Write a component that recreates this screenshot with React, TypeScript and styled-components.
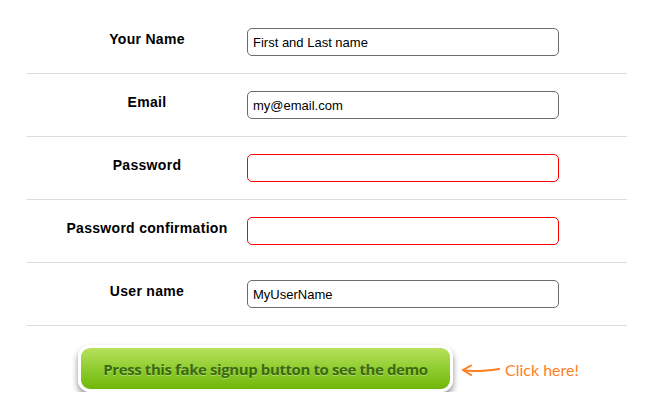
import React from "react";
import styled, { createGlobalStyle } from "styled-components";

const Global = createGlobalStyle`
  html, body { margin: 0; padding: 0; background: #fff; }
  body { font-family: "Liberation Sans", Arial, sans-serif; }
`;

const Form = styled.form`
  width: 600px;
  margin: 11px 0 0 27px;
`;

const Row = styled.div`
  display: grid;
  grid-template-columns: 200px 312px;
  align-items: start;
  padding: 17px 0 17px 20px;
  border-bottom: 1px solid #dddddd;
`;

const Label = styled.label`
  padding-top: 3px;
  text-align: center;
  font: bold 14px/16px "Liberation Sans", Arial, sans-serif;
  letter-spacing: 0.3px;
  color: #000;
`;

const Input = styled.input<{ $invalid?: boolean }>`
  box-sizing: border-box;
  width: 312px;
  height: 28px;
  margin: 0;
  padding: 0 5px;
  border: 1px solid ${(p) => (p.$invalid ? "#ff0000" : "#6b6b6b")};
  border-radius: 5px;
  background: #fff;
  font: 13px "Liberation Sans", Arial, sans-serif;
  color: #000;
  outline: none;
`;

const Footer = styled.div`
  display: flex;
  align-items: center;
  padding: 19px 0 0 51px;
`;

const Button = styled.button`
  box-sizing: border-box;
  width: 375px;
  height: 47px;
  border: 3px solid #fff;
  border-radius: 12px;
  background: linear-gradient(#b6e15c, #8ccb2c 55%, #6fb60a);
  box-shadow: 0 4px 6px rgba(0, 0, 0, 0.45);
  color: #3b6a0e;
  font: bold 15px "Open Sans", "DejaVu Sans", sans-serif;
  letter-spacing: -0.4px;
  text-shadow: 0 1px 0 rgba(255, 255, 255, 0.35);
  cursor: pointer;
  padding: 1px 0 0;
`;

const Hint = styled.span`
  display: flex;
  align-items: center;
  gap: 5px;
  margin: 2px 0 0 9px;
  color: #ff7d1e;
  font: 16px "Lato", sans-serif;
`;

const fields = [
  { label: "Your Name", value: "First and Last name" },
  { label: "Email", value: "my@email.com" },
  { label: "Password", value: "", invalid: true, type: "password" },
  { label: "Password confirmation", value: "", invalid: true, type: "password" },
  { label: "User name", value: "MyUserName" },
];

export default function App() {
  return (
    <>
      <Global />
      <Form onSubmit={(e) => e.preventDefault()}>
        {fields.map((f) => (
          <Row key={f.label}>
            <Label>{f.label}</Label>
            <Input
              type={f.type || "text"}
              defaultValue={f.value}
              $invalid={f.invalid}
            />
          </Row>
        ))}
        <Footer>
          <Button type="submit">Press this fake signup button to see the demo</Button>
          <Hint>
            <svg width="38" height="14" viewBox="0 0 38 14" fill="none">
              <path
                d="M1 7 C 10 9, 20 8.5, 37 6"
                stroke="#ff7d1e"
                strokeWidth="2"
                strokeLinecap="round"
              />
              <path
                d="M9 2.5 L1 7 L9 12"
                stroke="#ff7d1e"
                strokeWidth="2"
                strokeLinecap="round"
                strokeLinejoin="round"
              />
            </svg>
            Click here!
          </Hint>
        </Footer>
      </Form>
    </>
  );
}
